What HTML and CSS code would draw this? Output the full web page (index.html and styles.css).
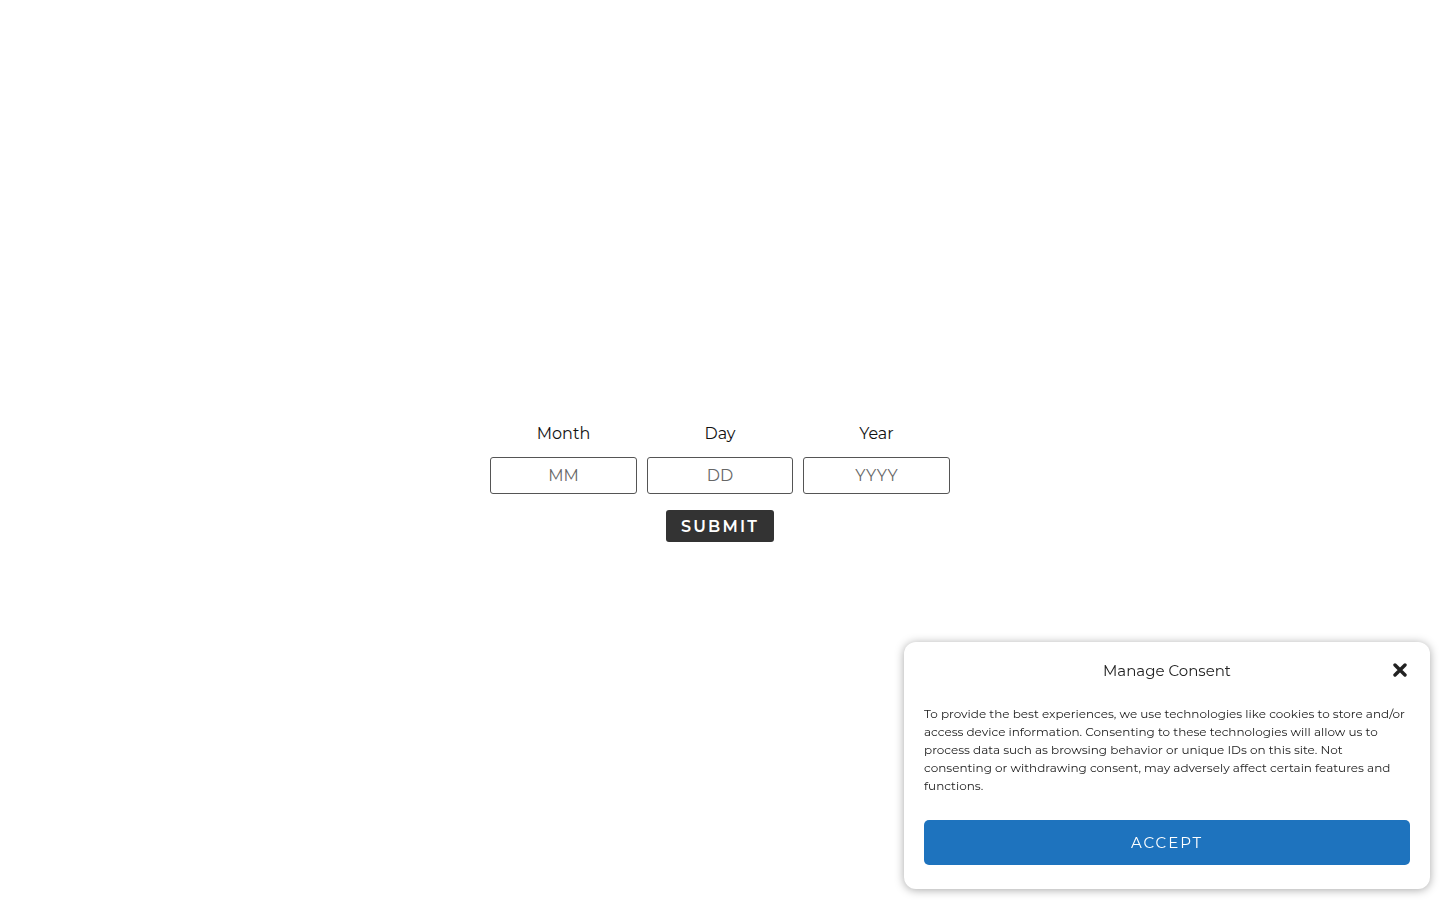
FILE: index.html
```html
<!DOCTYPE html>
<html>
  <head>
    <title>Age Verification</title>
    <link rel="stylesheet" href="styles.css">
  </head>
  <body>
    <main class="page">
      <form class="age-form" id="ageForm">
        <div class="fields">
          <div class="field">
            <label for="month">Month</label>
            <input type="text" id="month" name="month" placeholder="MM" maxlength="2" />
          </div>
          <div class="field">
            <label for="day">Day</label>
            <input type="text" id="day" name="day" placeholder="DD" maxlength="2" />
          </div>
          <div class="field">
            <label for="year">Year</label>
            <input type="text" id="year" name="year" placeholder="YYYY" maxlength="4" />
          </div>
        </div>
        <button type="submit" class="submit">Submit</button>
      </form>
    </main>

    <!-- cookie banner -->
    <div class="consent">
      <div class="consent-head">
        <span class="consent-title">Manage Consent</span>
        <button type="button" class="consent-close" aria-label="Close">
          <svg width="14" height="14" viewBox="0 0 14 14">
            <path d="M2 2 L12 12 M12 2 L2 12" stroke="#222" stroke-width="3.4" stroke-linecap="round" />
          </svg>
        </button>
      </div>
      <p class="consent-text">To provide the best experiences, we use technologies like cookies to store and/or access device information. Consenting to these technologies will allow us to process data such as browsing behavior or unique IDs on this site. Not consenting or withdrawing consent, may adversely affect certain features and functions.</p>
      <button type="button" class="consent-accept">Accept</button>
    </div>
  </body>
</html>
```

FILE: styles.css
```css
/* page styles */
body {
  margin: 0;
  font-family: Montserrat, Inter, "DejaVu Sans", sans-serif;
  background-color: #ffffff;
  color: #222222;
}

.page {
  display: flex;
  justify-content: center;
  padding-top: 424px;
}

.age-form {
  display: flex;
  flex-direction: column;
  align-items: center;
}

.fields {
  display: flex;
  gap: 10px;
}

.field {
  display: flex;
  flex-direction: column;
  align-items: center;
}

.field label {
  font-size: 16px;
  line-height: 20px;
  margin-bottom: 13px;
  color: #111111;
}

.field input {
  box-sizing: border-box;
  width: 146.5px;
  height: 37px;
  border: 1px solid #555555;
  border-radius: 3px;
  font-family: inherit;
  font-size: 16px;
  text-align: center;
  color: #333333;
}

.field input::placeholder {
  color: #666666;
}

.submit {
  margin-top: 16px;
  width: 108px;
  height: 32px;
  border: none;
  border-radius: 3px;
  background-color: #333333;
  color: #ffffff;
  font-family: inherit;
  font-size: 16px;
  font-weight: 600;
  letter-spacing: 2.2px;
  text-transform: uppercase;
  cursor: pointer;
}

.consent {
  position: fixed;
  right: 10px;
  bottom: 11px;
  box-sizing: border-box;
  width: 526px;
  padding: 16px 20px 24px;
  background-color: #ffffff;
  border-radius: 12px;
  box-shadow: 0 1px 10px rgba(0, 0, 0, 0.35);
}

.consent-head {
  position: relative;
  display: flex;
  justify-content: center;
  align-items: center;
  height: 24px;
}

.consent-title {
  font-size: 15px;
  color: #222222;
}

.consent-close {
  position: absolute;
  right: 3px;
  top: 5px;
  padding: 0;
  border: none;
  background: none;
  line-height: 0;
  cursor: pointer;
}

.consent-text {
  margin: 23px 0 25px;
  font-size: 12px;
  line-height: 18px;
  color: #222222;
}

.consent-accept {
  display: block;
  width: 100%;
  height: 45px;
  border: none;
  border-radius: 5px;
  background-color: #1e73be;
  color: #ffffff;
  font-family: inherit;
  font-size: 15px;
  letter-spacing: 2px;
  text-transform: uppercase;
  cursor: pointer;
}
```
